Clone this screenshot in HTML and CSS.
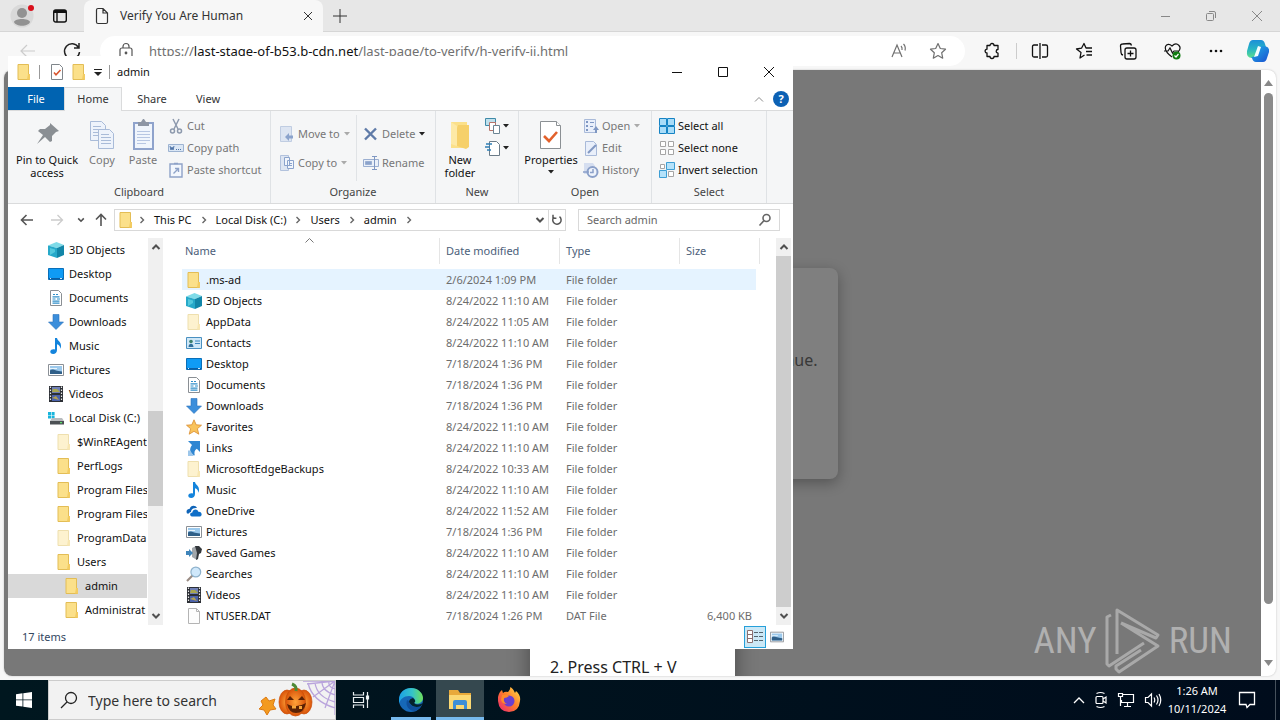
FILE: index.html
```html
<!DOCTYPE html>
<html lang="en">
<head>
<meta charset="utf-8">
<title>Verify You Are Human</title>
<link rel="stylesheet" href="styles.css">
</head>
<body>
<svg class="defs" aria-hidden="true">
  <linearGradient id="g-copilot" x1="0" y1="0" x2="0" y2="1"><stop offset="0" stop-color="#1b8fd8"/><stop offset=".5" stop-color="#27b5c4"/><stop offset="1" stop-color="#5fe08a"/></linearGradient>
  <linearGradient id="g-copilot2" x1="0" y1="0" x2="1" y2="1"><stop offset="0" stop-color="#1fb6e8"/><stop offset="1" stop-color="#1a4fd0"/></linearGradient>
  <linearGradient id="g-edge" x1="0" y1="0" x2="1" y2="0"><stop offset="0" stop-color="#1ba0e6"/><stop offset=".55" stop-color="#35c3c9"/><stop offset="1" stop-color="#6ee05a"/></linearGradient>
  <linearGradient id="g-fox" x1="1" y1="0" x2="0" y2="1"><stop offset="0" stop-color="#ffe14a"/><stop offset=".5" stop-color="#ff7a2a"/><stop offset="1" stop-color="#e8207a"/></linearGradient>
  <radialGradient id="g-pump"><stop offset="0" stop-color="#ffa33a"/><stop offset="1" stop-color="#d95309"/></radialGradient>
  <symbol id="i-folder" viewBox="0 0 16 16"><path fill="#fbe08a" stroke="#e3bd55" d="M2 .5h10.500V10l1 .5v5H2z"/><path fill="#f3cc62" d="M12 10h2v5.500h-3z"/></symbol>
  <symbol id="i-folder-hidden" viewBox="0 0 16 16"><path fill="#fdf2cf" stroke="#eedfae" d="M2 .5h10.500V10l1 .5v5H2z"/><path fill="#f8e7b3" d="M12 10h2v5.500h-3z"/></symbol>
  <symbol id="i-3d" viewBox="0 0 16 16"><path fill="#7fdbe8" d="M0 3.500 8.500 0 16 3 9 6z"/><path fill="#27a9c9" d="M0 3.500 9 6v10L0 13z"/><path fill="#1286a8" d="M9 6l7-3v10l-7 3z"/><path fill="#53c9dd" d="M2 6l5 1.500V10L2 13z"/></symbol>
  <symbol id="i-desktop" viewBox="0 0 16 16"><path fill="#0f9bf5" stroke="#0a6fb8" d="M.5 2.500h15v11H.5z"/><path fill="#0b5fa5" d="M1 12h14v1.500H1z"/><path fill="#cfeaff" d="M2 12h1v1H2zM12 12h2v1h-2z"/></symbol>
  <symbol id="i-doc" viewBox="0 0 16 16"><path fill="#fff" stroke="#8a8f94" d="M2.500.5h8l3 3v12h-11z"/><path stroke="#2f8fca" stroke-width="1.200" d="M5 4.500h2M8 4.500h2M4.500 6.800h7M4.500 9h3M9 9h3M4.500 11.200h7M4.500 13.200h7"/></symbol>
  <symbol id="i-down" viewBox="0 0 16 16"><path fill="#3b8edb" stroke="#2b74bd" stroke-width=".6" d="M5 .5h6V8h4.500L8 15.500.5 8H5z"/></symbol>
  <symbol id="i-music" viewBox="0 0 16 16"><path fill="#1484dc" d="M7 0h2c.4 3 4.500 3.800 4 8.500-.1 1-.6 1.800-1 2.300.5-3-1.200-4-3-4.600V12c0 2.500-1.800 4-3.800 4S2 14.800 2.300 13.300C2.600 11.500 5 10.600 7 11.500z"/></symbol>
  <symbol id="i-pic" viewBox="0 0 16 16"><path fill="#fff" stroke="#8b9096" d="M.5 2.500h15v11H.5z"/><path fill="#9cc9ec" d="M2 4h12v8H2z"/><path fill="#2f5f88" d="M2 8.500c3-2.500 5 .8 12 1V12H2z"/><path fill="#e8f4fc" d="M2 6h7v1H2z"/></symbol>
  <symbol id="i-video" viewBox="0 0 16 16"><path fill="#2c2f35" d="M1 0h14v16H1z"/><path fill="#6f7fb5" d="M4 1h8v6H4z"/><path fill="#a9a64e" d="M5 3h4l3 3H4z"/><path fill="#4b62ab" d="M4 9h8v6H4z"/><path fill="#b2a052" d="M4 12l4-2 3 4z"/><path stroke="#e8e8e8" stroke-width="1.200" stroke-dasharray="1.500 1.500" d="M2.500.5v15M13.500.5v15"/></symbol>
  <symbol id="i-disk" viewBox="0 0 16 16"><path fill="#19b5dc" d="M0 2h3v3H0zM3.600 2h3v3h-3zM0 5.600h3v3H0zM3.600 5.600h3v3h-3z"/><path fill="#b9bcbf" d="M4 8h10l2 3H2z"/><path fill="#4c5054" d="M2 11h14v3.500H2z"/><path fill="#5be06a" d="M12 12h2v1.200h-2z"/></symbol>
  <symbol id="i-contact" viewBox="0 0 16 16"><path fill="#cfe7f7" stroke="#4a90c0" d="M.5 2.500h15v11H.5z"/><circle cx="5" cy="6.500" r="1.800" fill="#3b7f6a"/><path fill="#2f6f9c" d="M2.500 12c0-4.500 5-4.500 5 0z"/><path stroke="#3b86bd" d="M9 6h5M9 8.500h5"/></symbol>
  <symbol id="i-star" viewBox="0 0 16 16"><path fill="#f9c35c" stroke="#d98c2e" stroke-width=".8" d="M8 .8l2.200 5 5.300.4-4.100 3.500 1.400 5.500L8 12.300l-4.800 2.900 1.400-5.500L.5 6.200l5.300-.4z"/></symbol>
  <symbol id="i-link" viewBox="0 0 16 16"><path fill="#2f86d2" d="M2 1h12v11l-3.200-3.200C8.500 10.500 8 12.500 8.800 15.500 3.500 13.500 3 9 6 5z"/><path fill="#9cc6ea" d="M2 10.500h2l4 5.500H2z"/></symbol>
  <symbol id="i-onedrive" viewBox="0 0 16 16"><path fill="#0f64b8" d="M1 10.500C-.5 7 2 5.500 3.500 6 4.500 2 9.500 1.500 11 5c-4-.5-6 1.500-6 4-1.500.2-2 1-2 1.500z"/><path fill="#0f6fc8" d="M6 13.500c-3-1-2-4 .3-4 .3-3.500 5.200-4 6-.8 4-.4 4.200 4.300 1.700 4.800z"/></symbol>
  <symbol id="i-games" viewBox="0 0 16 16"><path fill="#a2a7ab" d="M6 3l4-2 3 6-2 8-5-3z"/><path fill="#33373b" d="M9 1h4l3 3-1 4-2 1-1 5-2 1 1-7z"/><path fill="#3f85ba" d="M0 6h3V4l4 4-4 4v-2H0z"/></symbol>
  <symbol id="i-search-color" viewBox="0 0 16 16"><path stroke="#9a8c84" stroke-width="2.200" d="M1 15l5.500-5.500"/><circle cx="9.800" cy="6" r="4.900" fill="#cfe8fb" stroke="#8fb2cc" stroke-width="1.200"/></symbol>
  <symbol id="i-file" viewBox="0 0 16 16"><path fill="#fdfdfd" stroke="#b4b4b4" d="M2.500.5h8l3 3v12h-11z"/><path fill="none" stroke="#b4b4b4" d="M10.500.5v3h3"/></symbol>
  <symbol id="i-props" viewBox="0 0 16 16"><path fill="#fff" stroke="#80868b" d="M2.500.5h8l3 3v12h-11z"/><path fill="none" stroke="#d8562f" stroke-width="1.600" d="M5 8.500l2 2.300L11.500 6"/></symbol>
  <symbol id="i-up" viewBox="0 0 10 10"><path fill="none" stroke="#505050" stroke-width="2" d="M1.500 7 5 3.500 8.500 7"/></symbol>
  <symbol id="i-dn" viewBox="0 0 10 10"><path fill="none" stroke="#505050" stroke-width="2" d="M1.500 3 5 6.500 8.500 3"/></symbol>
  <symbol id="i-caret" viewBox="0 0 6 4"><path fill="currentColor" d="M0 0h6L3 3.500z"/></symbol>
  <symbol id="i-chev" viewBox="0 0 6 8"><path fill="none" stroke="#666" stroke-width="1.400" d="M1.500 1l3 3-3 3"/></symbol>
</svg>

<div class="desktop">
  <section class="browser">
    <header class="tabstrip">
      <button class="profile" aria-label="Profile"><svg width="28" height="28" viewBox="0 0 28 28"><circle cx="14" cy="14" r="11.500" fill="#d9d9d9"/><circle cx="14" cy="11" r="5" fill="#929292"/><path fill="#929292" d="M6 20c1-4 15-4 16 0-2 5-14 5-16 0z"/><circle cx="23" cy="6" r="3" fill="#d9101c"/></svg></button>
      <button class="actions" aria-label="Tab actions"><svg width="16" height="16" viewBox="0 0 16 16" fill="none" stroke="#111" stroke-width="1.400"><rect x="1.700" y="2" width="12.600" height="12" rx="2"/><path stroke-width="3" d="M2 3.500h12"/><path d="M5 4v10"/></svg></button>
      <div class="tab">
        <svg width="14" height="18" viewBox="0 0 14 18" fill="none" stroke="#333" stroke-width="1.200"><path d="M1.500 3c0-1 .6-1.500 1.500-1.500h5L12.500 6v9c0 1-.5 1.500-1.500 1.500H3c-1 0-1.500-.5-1.500-1.500zM8 1.500V6h4.500"/></svg>
        <span class="tab-title">Verify You Are Human</span>
        <button aria-label="Close tab"><svg width="10" height="10" viewBox="0 0 10 10" stroke="#333"><path d="M1 1l8 8M9 1L1 9"/></svg></button>
      </div>
      <button class="newtab" aria-label="New tab"><svg width="16" height="16" viewBox="0 0 16 16" stroke="#333"><path d="M8 1v14M1 8h14"/></svg></button>
      <div class="wincontrols">
        <button aria-label="Minimize"><svg width="12" height="12" viewBox="0 0 12 12" stroke="#888"><path d="M2 6.500h9"/></svg></button>
        <button aria-label="Restore"><svg width="12" height="12" viewBox="0 0 12 12" fill="none" stroke="#888"><rect x="1.500" y="3.500" width="7" height="7" rx="1"/><path d="M4 1.500h5q1.500 0 1.500 1.500v5"/></svg></button>
        <button aria-label="Close"><svg width="12" height="12" viewBox="0 0 12 12" stroke="#888"><path d="M1 1l10 10M11 1L1 11"/></svg></button>
      </div>
    </header>
    <nav class="toolbar">
      <button class="tool" aria-label="Back"><svg width="20" height="20" viewBox="0 0 20 20" fill="none" stroke="#ccc" stroke-width="1.200"><path d="M3 10h14M9 4l-6 6 6 6"/></svg></button>
      <button class="tool" aria-label="Refresh"><svg width="20" height="20" viewBox="0 0 20 20" fill="none" stroke="#222" stroke-width="1.500"><path d="M16.500 6.500A7.500 7.500 0 1 0 17.500 11M17 2v5h-5"/></svg></button>
      <div class="omnibox">
        <svg width="16" height="18" viewBox="0 0 16 18" fill="none" stroke="#555" stroke-width="1.200"><rect x="2" y="6" width="12" height="10" rx="2"/><path d="M5 6V4.500a3 3 0 0 1 6 0V6"/><circle cx="8" cy="11" r=".8" fill="#555"/></svg>
        <div class="url" role="textbox" aria-label="Address" contenteditable="true" spellcheck="false">https://<b>last-stage-of-b53.b-cdn.net</b>/last-page/to-verify/h-verify-ii.html</div>
        <button aria-label="Read aloud"><svg width="18" height="18" viewBox="0 0 18 18" fill="none" stroke="#707070" stroke-width="1.200"><path d="M2 15L7 3l5 12M4 11h6M11 4q1.500 1.500 1 4M13.500 2q2.500 2.500 1.500 6.500"/></svg></button>
        <button aria-label="Favorite"><svg width="18" height="18" viewBox="0 0 18 18" fill="none" stroke="#707070" stroke-width="1.200" stroke-linejoin="round"><path d="M9 1.500l2.300 5 5.200.7-3.800 3.600 1 5.400L9 13.500l-4.700 2.700 1-5.400L1.500 7.200l5.200-.7z"/></svg></button>
      </div>
      <div class="tools">
        <button aria-label="Extensions"><svg width="18" height="18" viewBox="0 0 18 18" fill="none" stroke="#111" stroke-width="1.300" stroke-linejoin="round"><path d="M4 3.500h3a2 2 0 0 1 4 0h4v4a1.800 1.800 0 0 0 0 3.600v3.400h-4a2 2 0 0 1-4 0H4V11a1.900 1.900 0 1 1 0-3.800z"/></svg></button>
        <span class="rule"></span>
        <button aria-label="Split screen"><svg width="18" height="18" viewBox="0 0 18 18" fill="none" stroke="#111" stroke-width="1.300"><path d="M7 3H3q-1.500 0-1.500 1.500v9Q1.500 15 3 15h4M11 3h4q1.500 0 1.500 1.500v9Q16.500 15 15 15h-4M9 1v16"/></svg></button>
        <button aria-label="Favorites"><svg width="18" height="18" viewBox="0 0 18 18" fill="none" stroke="#111" stroke-width="1.300" stroke-linejoin="round"><path d="M9.500 13L5 16l1-5.500L1.500 7l5-.8L9 1.500l2 4.500h6M11 9.500h6M11.500 13H17"/></svg></button>
        <button aria-label="Collections"><svg width="18" height="18" viewBox="0 0 18 18" fill="none" stroke="#111" stroke-width="1.300"><rect x="6" y="6" width="11" height="11" rx="2"/><path d="M11.500 8.500v6M8.500 11.500h6M4 13q-2-.5-2-2.500L1.500 4Q1.500 2 3.500 2l7-.5q1.500 0 2 2"/></svg></button>
        <button aria-label="Browser essentials"><svg width="18" height="18" viewBox="0 0 18 18" fill="none" stroke="#111" stroke-width="1.200"><path d="M9 15C-3 6 4-1 9 4c5-5 11 1 6 6M1 9h4l2-3 2.500 5L11 9h4"/><circle cx="13.500" cy="13.500" r="4" fill="#107c10" stroke="none"/><path stroke="#fff" d="M11.500 13.500l1.500 1.500 2.500-3"/></svg></button>
        <button aria-label="Settings and more"><svg width="18" height="18" viewBox="0 0 18 18" fill="#111"><circle cx="4" cy="9" r="1.300"/><circle cx="9" cy="9" r="1.300"/><circle cx="14" cy="9" r="1.300"/></svg></button>
        <button aria-label="Copilot"><svg width="26" height="26" viewBox="0 0 26 26"><path fill="url(#g-copilot)" d="M8 2h8q3 0 4 4l1 3h-4q-3 0-4 3l-2 6q-1 3-4 2-6 0-5-7l2-7q1-4 4-4z"/><path fill="url(#g-copilot2)" d="M18 24h-7q-3 0-4-4l-1-1q5 0 6-4l2-5q1-2 4-2 7 0 6 6l-2 6q-1 4-4 4z"/><path fill="#f2fdff" d="M13 8l3 1-3 9-4 1z"/></svg></button>
      </div>
    </nav>
    <main class="viewport">
      <div class="page">
        <div class="captcha"><p>continue.</p></div>
        <div class="steps"><p>2. Press CTRL + V</p></div>
        <div class="watermark">
          <span>ANY</span>
          <svg width="56" height="66" viewBox="0 0 56 66" fill="none" stroke="#a9a9a9" stroke-width="3" stroke-linejoin="round"><path d="M6 7L2 9v47l2 2 35-23M12 46V2l41 25-2 3-35-15M16 15l37 23-39 26-3-3v-3l25-16"/></svg>
          <span>RUN</span>
        </div>
      </div>
      <div class="pagebar"><svg width="9" height="6" viewBox="0 0 6 4"><path fill="#888" d="M0 4h6L3 0z"/></svg><i></i><svg width="9" height="6" viewBox="0 0 6 4"><path fill="#888" d="M0 0h6L3 4z"/></svg></div>
    </main>
  </section>

  <section class="explorer">
    <header class="titlebar">
      <svg class="i16"><use href="#i-folder"/></svg><span class="tick"></span>
      <svg class="i16"><use href="#i-props"/></svg>
      <svg class="i16"><use href="#i-folder"/></svg>
      <svg class="qat" width="8" height="8" viewBox="0 0 8 8"><path d="M0 1.500h8" stroke="#222"/><path fill="#222" d="M0 4h8L4 8z"/></svg><span class="tick"></span>
      <h1>admin</h1>
      <div class="winbtns">
        <button aria-label="Minimize"><svg width="12" height="12" viewBox="0 0 12 12" stroke="#111"><path d="M1 6.500h10"/></svg></button>
        <button aria-label="Maximize"><svg width="12" height="12" viewBox="0 0 12 12" fill="none" stroke="#111"><path d="M1.500 1.500h9v9h-9z"/></svg></button>
        <button aria-label="Close"><svg width="12" height="12" viewBox="0 0 12 12" stroke="#111"><path d="M1 1l10 10M11 1L1 11"/></svg></button>
      </div>
    </header>
    <nav class="menus">
      <button class="file">File</button><button class="on">Home</button><button>Share</button><button>View</button>
      <svg class="collapse" width="10" height="6" viewBox="0 0 10 6" fill="none" stroke="#8a8a8a"><path d="M1 5.500l4-4 4 4"/></svg>
      <button class="help" aria-label="Help">?</button>
    </nav>
    <div class="ribbon">
      <div class="group clip">
        <div class="body">
          <button class="big pin"><svg width="32" height="32" viewBox="0 0 32 32" fill="#8a8f94"><path d="M19 4l9 8-3 1-4 4v5l-2 1-5-5-8 7 6-9-5-4 2-2h5l5-4z"/></svg>Pin to Quick access</button>
          <button class="big copy off"><svg width="32" height="32" viewBox="0 0 32 32" fill="#eef3fb" stroke="#a9bbd8"><path d="M4.500 2.500h11l4 4v15h-15z"/><path d="M7 7.500h8M7 10.500h10M7 13.500h5M7 16.500h5"/><path d="M12.500 10.500h11l4 4v15h-15z"/><path d="M15 15.500h8M15 18.500h10M15 21.500h10M15 24.500h10"/></svg>Copy</button>
          <button class="big paste off"><svg width="32" height="32" viewBox="0 0 32 32" fill="#f0f5fc" stroke="#8fa3cc" stroke-width="2"><path d="M7 4h19v26H7z"/><path fill="#8d96a5" stroke="none" d="M11 3h3l2-3h1l2 3h3v4H11z"/><path stroke="#b7c6e2" stroke-width="1" d="M10 12.500h13M10 15.500h13M10 18.500h13M10 21.500h13M10 24.500h9"/></svg>Paste</button>
          <div class="stack off">
            <button><svg class="i16" viewBox="0 0 16 16" fill="none" stroke="#8d99ad" stroke-width="1.500"><path d="M5 1l5 10M11 1L6 11"/><circle cx="4.500" cy="13" r="2"/><circle cx="11.500" cy="13" r="2"/></svg>Cut</button>
            <button><svg class="i16" viewBox="0 0 16 16"><path fill="#dbe7f5" stroke="#9db3d1" d="M.5 4.500h15v7H.5z"/><path fill="none" stroke="#4f74a8" d="M2 6l1 4 1-3 1 3 1-4M8 9.500h1M10 9.500h1M12 9.500h1"/></svg>Copy path</button>
            <button><svg class="i16" viewBox="0 0 16 16" fill="#f3f7fd" stroke="#8ea2c8" stroke-width="1.400"><path d="M2 2h12v13H2z"/><path d="M6 1.500h4M5.500 11.500L10 7M7 6.500h3.500V10"/></svg>Paste shortcut</button>
          </div>
        </div>
        <h2>Clipboard</h2>
      </div>
      <div class="group org">
        <div class="body">
          <div class="stack two off">
            <button><svg class="i16" viewBox="0 0 16 16"><path fill="#dde5f2" stroke="#c0cde2" d="M1.500.5h11v15h-11z"/><path fill="#8ba3cc" d="M6 11l4-4v2.500h4v3h-4V15z"/></svg>Move to<svg class="caret"><use href="#i-caret"/></svg></button>
            <button><svg class="i16" viewBox="0 0 16 16" fill="#dde5f2" stroke="#b2c2dd"><path d="M1.500.5h8v15h-8z"/><path fill="#f2f6fc" stroke="#8ba3cc" d="M5.500 2.500h5v8h-5zM8.500 5.500h6v8h-6zM10 8.500h3M10 10.500h3"/></svg>Copy to<svg class="caret"><use href="#i-caret"/></svg></button>
          </div>
          <div class="stack two off line">
            <button><svg class="i16" viewBox="0 0 16 16" fill="none" stroke="#5f7ba8" stroke-width="2.400"><path d="M2 2.500l11 11M13 2.500l-11 11"/></svg>Delete<svg class="caret dark"><use href="#i-caret"/></svg></button>
            <button><svg class="i16" viewBox="0 0 16 16" fill="#eaf0f9" stroke="#9bafd1"><path d="M.5 4.500h15v7H.5z"/><path fill="#8ba3cc" d="M2.500 6.500h6v3h-6z"/><path d="M9 1.500h5M9 14.500h5M11.500 1.500v13" stroke="#7f97c2"/></svg>Rename</button>
          </div>
        </div>
        <h2>Organize</h2>
      </div>
      <div class="group new">
        <div class="body">
          <button class="big newf"><svg width="32" height="32" viewBox="0 0 32 32"><path fill="#fbe08a" d="M7 3h16v22l-2 4H7z"/><path fill="#f6d06a" d="M14 6h11v22l-3 2-9-3V9z"/><path fill="#fde9a6" d="M7 3l6 4v20l-6-2z"/></svg>New folder</button>
          <div class="stack icons">
            <button aria-label="New item"><svg class="i16" viewBox="0 0 16 16" fill="#fff" stroke="#6b8594"><path fill="#bfe0ec" stroke="#3f8aa8" d="M.5.500h10v7H.5z"/><path stroke="#b5746a" d="M4.500 4.500h6v8h-6z"/><path d="M8.500 7.500h6v8h-6z"/></svg><svg class="caret dark"><use href="#i-caret"/></svg></button>
            <button aria-label="Easy access"><svg class="i16" viewBox="0 0 16 16" fill="#fff" stroke="#6b7b88"><path d="M4.500 1.500h7l3 3v11h-10z"/><path stroke="#2f7fb5" stroke-width="1.400" d="M1 4h6M0 7h5M2 10h4"/></svg><svg class="caret dark"><use href="#i-caret"/></svg></button>
          </div>
        </div>
        <h2>New</h2>
      </div>
      <div class="group open">
        <div class="body">
          <button class="big prop"><svg width="32" height="32" viewBox="0 0 32 32" fill="#fff" stroke="#8b9094"><path d="M5.500 2.500h16l4 4v23h-20z"/><path d="M21.500 2.500v4h4"/><path fill="none" stroke="#e2612c" stroke-width="2.600" d="M9 17l5 5 8-9"/></svg>Properties<svg class="caret dark"><use href="#i-caret"/></svg></button>
          <div class="stack off">
            <button><svg class="i16" viewBox="0 0 16 16" fill="#e9effa" stroke="#a9bad9"><path d="M1.500 1.500h11v13h-11z"/><path fill="#7f97c2" stroke="none" d="M3 3h2v2H3zM3 7h2v2H3zM3 11h2v2H3zM7 4h4v1H7zM7 8h3v1H7zM13 8l3 4h-2v3h-2v-3h-2z"/></svg>Open<svg class="caret"><use href="#i-caret"/></svg></button>
            <button><svg class="i16" viewBox="0 0 16 16" fill="#e9effa" stroke="#a9bad9"><path d="M2.500 1.500h8l3 3v11h-11z"/><path stroke="#8298c2" stroke-width="2" d="M5 13l8-8"/></svg>Edit</button>
            <button><svg class="i16" viewBox="0 0 16 16"><path fill="#d5def0" d="M1 1h9l2 3v8H1z"/><circle cx="9.500" cy="10" r="5" fill="#eef3fb" stroke="#8ba0c9" stroke-width="2"/><path fill="none" stroke="#8ba0c9" stroke-width="1.500" d="M10 7v3.500H7M0 10h6"/></svg>History</button>
          </div>
        </div>
        <h2>Open</h2>
      </div>
      <div class="group sel">
        <div class="body">
          <div class="stack">
            <button><svg class="i16" viewBox="0 0 16 16" fill="#a9dcf8" stroke="#1583c4"><path d="M.5.500h7v7h-7zM8.500.5h7v7h-7zM.5 8.500h7v7h-7zM8.500 8.500h7v7h-7z"/></svg>Select all</button>
            <button><svg class="i16" viewBox="0 0 16 16" fill="#fff" stroke="#a5a5a5"><path d="M1.500 1.500h5v5h-5zM9.500 1.500h5v5h-5zM1.500 9.500h5v5h-5zM9.500 9.500h5v5h-5z"/></svg>Select none</button>
            <button><svg class="i16" viewBox="0 0 16 16" fill="#b5e2fa" stroke="#3d9ed4"><path d="M7.500.5h8v7h-8zM.5 8.500h7v7h-7z"/><path fill="#fff" stroke="#a5a5a5" d="M1.500 2.500h4v4h-4zM9.500 9.500h5v5h-5z"/></svg>Invert selection</button>
          </div>
        </div>
        <h2>Select</h2>
      </div>
    </div>
    <div class="addressrow">
      <button class="nav" aria-label="Back"><svg width="14" height="14" viewBox="0 0 14 14" fill="none" stroke="#555" stroke-width="1.600"><path d="M1.500 7H13M6.500 2l-5 5 5 5"/></svg></button>
      <button class="nav" aria-label="Forward"><svg width="14" height="14" viewBox="0 0 14 14" fill="none" stroke="#ccc" stroke-width="1.300"><path d="M1 7h11.500M7.500 2l5 5-5 5"/></svg></button>
      <button class="nav narrow" aria-label="Recent"><svg width="8" height="8"><use href="#i-dn"/></svg></button>
      <button class="nav narrow" aria-label="Up"><svg width="14" height="14" viewBox="0 0 14 14" fill="none" stroke="#555" stroke-width="1.600"><path d="M7 1.500V13M2 6.500l5-5 5 5"/></svg></button>
      <div class="crumbs">
        <svg class="i16"><use href="#i-folder"/></svg><svg class="chev"><use href="#i-chev"/></svg>
        <button>This PC</button><svg class="chev"><use href="#i-chev"/></svg>
        <button>Local Disk (C:)</button><svg class="chev"><use href="#i-chev"/></svg>
        <button>Users</button><svg class="chev"><use href="#i-chev"/></svg>
        <button>admin</button><svg class="chev"><use href="#i-chev"/></svg>
        <span class="grow"></span>
        <button class="end" aria-label="Previous locations"><svg width="10" height="10"><use href="#i-dn"/></svg></button>
        <button class="end refresh" aria-label="Refresh"><svg width="12" height="12" viewBox="0 0 12 12" fill="none" stroke="#555" stroke-width="1.500"><path d="M3 3a4.200 4.200 0 1 0 5.500-.3M2 .8v3.400h3.400"/></svg></button>
      </div>
      <label class="find"><input type="search" placeholder="Search admin" aria-label="Search admin"><svg width="14" height="14" viewBox="0 0 14 14" fill="none" stroke="#666" stroke-width="1.600"><circle cx="8.500" cy="5" r="3.500"/><path d="M6 7.500L1.500 12.500"/></svg></label>
    </div>
    <div class="panes">
      <ul class="tree">
        <li><svg class="i16"><use href="#i-3d"/></svg>3D Objects</li>
        <li><svg class="i16"><use href="#i-desktop"/></svg>Desktop</li>
        <li><svg class="i16"><use href="#i-doc"/></svg>Documents</li>
        <li><svg class="i16"><use href="#i-down"/></svg>Downloads</li>
        <li><svg class="i16"><use href="#i-music"/></svg>Music</li>
        <li><svg class="i16"><use href="#i-pic"/></svg>Pictures</li>
        <li><svg class="i16"><use href="#i-video"/></svg>Videos</li>
        <li><svg class="i16"><use href="#i-disk"/></svg>Local Disk (C:)</li>
        <li class="l2"><svg class="i16"><use href="#i-folder-hidden"/></svg>$WinREAgent</li>
        <li class="l2"><svg class="i16"><use href="#i-folder"/></svg>PerfLogs</li>
        <li class="l2"><svg class="i16"><use href="#i-folder"/></svg>Program Files</li>
        <li class="l2"><svg class="i16"><use href="#i-folder"/></svg>Program Files</li>
        <li class="l2"><svg class="i16"><use href="#i-folder-hidden"/></svg>ProgramData</li>
        <li class="l2"><svg class="i16"><use href="#i-folder"/></svg>Users</li>
        <li class="l3 current"><svg class="i16"><use href="#i-folder"/></svg>admin</li>
        <li class="l3"><svg class="i16"><use href="#i-folder"/></svg>Administrat</li>
      </ul>
      <div class="bar treebar"><svg width="10" height="10"><use href="#i-up"/></svg><div class="track"><i></i></div><svg width="10" height="10"><use href="#i-dn"/></svg></div>
      <div class="listing">
        <svg class="sort" width="9" height="5" viewBox="0 0 9 5" fill="none" stroke="#777"><path d="M.5 4.500l4-4 4 4"/></svg>
        <table>
          <colgroup><col><col class="c-date"><col class="c-type"><col class="c-size"></colgroup>
          <thead><tr><th>Name</th><th>Date modified</th><th>Type</th><th>Size</th></tr></thead>
          <tbody>
            <tr class="hover"><td><svg class="i16"><use href="#i-folder"/></svg>.ms-ad</td><td>2/6/2024 1:09 PM</td><td>File folder</td><td></td></tr>
            <tr><td><svg class="i16"><use href="#i-3d"/></svg>3D Objects</td><td>8/24/2022 11:10 AM</td><td>File folder</td><td></td></tr>
            <tr><td><svg class="i16"><use href="#i-folder-hidden"/></svg>AppData</td><td>8/24/2022 11:05 AM</td><td>File folder</td><td></td></tr>
            <tr><td><svg class="i16"><use href="#i-contact"/></svg>Contacts</td><td>8/24/2022 11:10 AM</td><td>File folder</td><td></td></tr>
            <tr><td><svg class="i16"><use href="#i-desktop"/></svg>Desktop</td><td>7/18/2024 1:36 PM</td><td>File folder</td><td></td></tr>
            <tr><td><svg class="i16"><use href="#i-doc"/></svg>Documents</td><td>7/18/2024 1:36 PM</td><td>File folder</td><td></td></tr>
            <tr><td><svg class="i16"><use href="#i-down"/></svg>Downloads</td><td>7/18/2024 1:36 PM</td><td>File folder</td><td></td></tr>
            <tr><td><svg class="i16"><use href="#i-star"/></svg>Favorites</td><td>8/24/2022 11:10 AM</td><td>File folder</td><td></td></tr>
            <tr><td><svg class="i16"><use href="#i-link"/></svg>Links</td><td>8/24/2022 11:10 AM</td><td>File folder</td><td></td></tr>
            <tr><td><svg class="i16"><use href="#i-folder-hidden"/></svg>MicrosoftEdgeBackups</td><td>8/24/2022 10:33 AM</td><td>File folder</td><td></td></tr>
            <tr><td><svg class="i16"><use href="#i-music"/></svg>Music</td><td>8/24/2022 11:10 AM</td><td>File folder</td><td></td></tr>
            <tr><td><svg class="i16"><use href="#i-onedrive"/></svg>OneDrive</td><td>8/24/2022 11:52 AM</td><td>File folder</td><td></td></tr>
            <tr><td><svg class="i16"><use href="#i-pic"/></svg>Pictures</td><td>7/18/2024 1:36 PM</td><td>File folder</td><td></td></tr>
            <tr><td><svg class="i16"><use href="#i-games"/></svg>Saved Games</td><td>8/24/2022 11:10 AM</td><td>File folder</td><td></td></tr>
            <tr><td><svg class="i16"><use href="#i-search-color"/></svg>Searches</td><td>8/24/2022 11:10 AM</td><td>File folder</td><td></td></tr>
            <tr><td><svg class="i16"><use href="#i-video"/></svg>Videos</td><td>8/24/2022 11:10 AM</td><td>File folder</td><td></td></tr>
            <tr><td><svg class="i16"><use href="#i-file"/></svg>NTUSER.DAT</td><td>7/18/2024 1:26 PM</td><td>DAT File</td><td>6,400 KB</td></tr>
          </tbody>
        </table>
      </div>
      <div class="bar"><svg width="10" height="10"><use href="#i-up"/></svg><div class="track full"><i></i></div><svg width="10" height="10"><use href="#i-dn"/></svg></div>
    </div>
    <footer class="status">
      <span>17 items</span>
      <button class="view on" aria-label="Details view"><svg class="i16" viewBox="0 0 16 16" fill="#fff" stroke="#8b6f70"><path d="M.5 1.500h5v12h-5zM.5 5.500h5M.5 9.500h5"/><path stroke="#54646e" d="M7 3.500h4M12 3.500h4M7 7.500h4M12 7.500h4M7 11.500h4M12 11.500h4"/></svg></button>
      <button class="view" aria-label="Large icons view"><svg width="14" height="14"><use href="#i-pic"/></svg></button>
    </footer>
  </section>

  <footer class="taskbar">
    <button class="start" aria-label="Start"><svg width="16" height="16" viewBox="0 0 16 16" fill="#fff"><path d="M0 2.300l6.500-1v6.200H0zM7.300 1.200L16 0v7.500H7.300zM0 8.300h6.500v6.300L0 13.700zM7.300 8.300H16V16l-8.700-1.300z"/></svg></button>
    <label class="tasksearch">
      <svg width="18" height="18" viewBox="0 0 18 18" fill="none" stroke="#222" stroke-width="1.300"><circle cx="11" cy="7" r="5.500"/><path d="M7 11l-6 6"/></svg>
      <input type="search" placeholder="Type here to search" aria-label="Type here to search">
      <svg class="art" width="78" height="38" viewBox="0 0 78 38"><g fill="none" stroke="#b9a4dc" stroke-width="1.300"><path d="M78 0L50 3M78 0L56 16M78 0L68 27M78 0v34M78 0L46 0M72 1q-1 5 6 7M65 1q0 9 13 13M58 2q2 14 20 19M51 2q4 18 27 25"/></g><path fill="#f39a1f" stroke="#dd7a12" stroke-linejoin="round" d="M9 16l3 4 6-2-2 6 3 4-6 1-3 5-3-5-5-1 4-4-2-4z"/><g fill="url(#g-pump)" stroke="#c94f08" stroke-width=".7"><ellipse cx="30" cy="21" rx="8" ry="12"/><ellipse cx="47" cy="21" rx="8" ry="12"/><ellipse cx="38.500" cy="21" rx="10" ry="14"/></g><path fill="none" stroke="#4f8a35" stroke-width="3" d="M39 10q1-5-4-7"/><path fill="#5a2205" d="M30 19l3-4 4 4zM41 19l4-4 3 4zM30 23q9 5 19-1-2 10-10 10-7 0-9-9z"/><path fill="#f7a63a" d="M35 24.500h4v3h-4zM42 28h3v-3h-3z"/></svg>
    </label>
    <button aria-label="Task View"><svg width="18" height="18" viewBox="0 0 18 18" fill="none" stroke="#e8eef0" stroke-width="1.200"><path d="M1.500 1v3h10V1M1.500 6.500h10v5h-10zM1.500 17v-3h10v3M15.500 1v16"/><path fill="#fff" d="M14.500 5h2v3h-2z"/></svg></button>
    <button class="run" aria-label="Microsoft Edge"><svg width="26" height="26" viewBox="0 0 26 26"><circle cx="13" cy="13" r="12" fill="#1668b8"/><path fill="url(#g-edge)" d="M1 13C1 5 7 1 13 1c7 0 12 5 12 10 0 5-6 7-9 5 2-3 0-7-5-7-5 0-9 3-10 8z"/><path fill="#0f4f9c" d="M9 13c-2 6 2 11 8 11 3-1 5-3 6-5-5 2-11 1-12-5z"/><path fill="#04222c" d="M15 11q4 3 1 5 3 3 9 0l-2 3q-8 3-12-4 0-3 4-4z"/></svg></button>
    <button class="run active" aria-label="File Explorer"><svg width="24" height="22" viewBox="0 0 24 22"><path fill="#e8a93a" d="M1 1h9l2 3h11v4H1z"/><path fill="#fbd873" d="M1 6h22v14H1z"/><path fill="#3f8fd6" d="M5 20v-7q0-2 2-2h10q2 0 2 2v7h-3v-4H8v4z"/></svg></button>
    <button aria-label="Firefox"><svg width="26" height="26" viewBox="0 0 26 26"><path fill="url(#g-fox)" d="M2 10Q3 5 6 3l1 3q2-2 5-1 3-3 2-5 3 1 5 6l1-2q5 4 4 10-1 11-11 11T2 14z"/><circle cx="13" cy="14" r="5.500" fill="#6a3fd0"/><path fill="#ff8a2a" d="M6 8q4-1 7 1-2 2-5 2-1 4 3 6-5 0-6-4z"/></svg></button>
    <div class="tray">
      <svg width="12" height="8" viewBox="0 0 12 8" fill="none" stroke="#fff" stroke-width="1.300"><path d="M1 7l5-5 5 5"/></svg>
      <svg width="14" height="18" viewBox="0 0 14 18" fill="none" stroke="#fff" stroke-width="1.200"><rect x="2" y="5.500" width="7" height="7" rx="1"/><path d="M9 8l3-2v6l-3-2M2.500 2.500q4-2 8 0M2.500 15.500q4 2 8 0"/></svg>
      <svg width="18" height="18" viewBox="0 0 18 18" fill="none" stroke="#fff" stroke-width="1.200"><path d="M6 3.500h10.500v8H4.500V9M10.500 12v3M7 15.500h7M1.500 2.500h4v3h-4zM3.500 6v9"/></svg>
      <svg width="18" height="16" viewBox="0 0 18 16" fill="none" stroke="#fff" stroke-width="1.200"><path d="M1.500 5.500h2.500l3.500-3.500v12L4 10.500H1.500zM10 5.500q1.500 2.500 0 5M12.500 3.500q3 4.500 0 9M15 2q3.500 6 0 12"/></svg>
      <div class="clock"><time>1:26 AM</time><time>10/11/2024</time></div>
      <svg class="note" width="18" height="18" viewBox="0 0 18 18" fill="none" stroke="#fff" stroke-width="1.300"><path d="M1.500 1.500h15v12H12L9 16.500 8 13.500H1.500z"/></svg>
    </div>
  </footer>
</div>
</body>
</html>
```
FILE: styles.css
```css
* { box-sizing: border-box; }
body { margin: 0; font: 11px/14px "Noto Sans", "Open Sans", sans-serif; color: #111; }
button { padding: 0; border: 0; background: none; font: inherit; color: inherit; display: flex; align-items: center; justify-content: center; }
input { border: 0; background: none; font: inherit; padding: 0; outline: 0; min-width: 0; flex: 1; }
h1, h2, p, ul { margin: 0; padding: 0; font-weight: 400; }
svg { display: block; flex: none; }
.defs { position: absolute; width: 0; height: 0; }
.i16 { width: 16px; height: 16px; }
.caret { width: 6px; height: 4px; color: #aaa; }
.caret.dark { color: #222; }

.desktop { position: relative; height: 100vh; display: flex; flex-direction: column; overflow: hidden; }

/* browser */
.browser { flex: 1; min-height: 0; display: flex; flex-direction: column; background: #f7f7f7; }
.tabstrip { display: flex; height: 32px; background: #e7e7e7; border-bottom: 1px solid #d6d6d6; padding-left: 8px; }
.profile { width: 28px; }
.actions { width: 48px; }
.tab { width: 239px; height: 32px; margin-bottom: -1px; background: #f7f7f7; border-radius: 8px 8px 0 0; display: flex; align-items: center; gap: 11px; padding: 0 10px 0 11px; }
.tab-title { flex: 1; font-size: 12px; color: #333; white-space: nowrap; }
.newtab { width: 34px; }
.wincontrols { margin-left: auto; display: flex; }
.wincontrols button { width: 46px; }
.toolbar { display: flex; align-items: center; height: 38px; padding: 0 2px 0 6px; }
.tool { width: 44px; }
.omnibox { flex: 1; height: 30px; margin-left: 6px; background: #fff; border-radius: 15px; display: flex; align-items: center; gap: 15px; padding: 0 15px 0 18px; min-width: 0; }
.omnibox button { width: 24px; }
.url { flex: 1; font-size: 13px; line-height: 18px; color: #707070; white-space: nowrap; overflow: hidden; }
.url b { font-weight: 400; color: #111; }
.tools { display: flex; align-items: center; }
.tools button { width: 44px; }
.tools button:first-child { width: 54px; }
.tools button:last-child { width: 40px; }
.rule { width: 1px; height: 16px; background: #ccc; margin: 0 1px 0 -3px; }

.viewport { flex: 1; min-height: 0; margin: 0 4px 4px; display: flex; border-radius: 8px; overflow: hidden; background: #fff; box-shadow: 0 0 2px #bbb; }
.page { position: relative; flex: 1; min-height: 0; overflow: hidden; background: #787878; display: flex; flex-direction: column; align-items: center; }
.captcha { width: 410px; height: 211px; flex: none; margin-top: 198px; background: #7f7f7f; border-radius: 8px; box-shadow: 0 4px 14px rgba(0,0,0,.3); padding: 80px 20px 0; text-align: right; font-size: 16px; line-height: 24px; color: #383838; }
.steps { width: 205px; flex: none; margin-top: 136px; background: #fff; box-shadow: 0 0 20px rgba(0,0,0,.4); padding: 43px 20px 16px; font-size: 16px; line-height: 18px; white-space: nowrap; color: #222; }
.watermark { position: absolute; right: 29px; bottom: 2px; display: flex; align-items: center; gap: 8px; color: #b0b0b0; font: 37px/62px "Roboto Condensed", "Open Sans Condensed", "Liberation Sans", sans-serif; }
.pagebar { width: 15px; display: flex; flex-direction: column; align-items: center; padding: 10px 0; gap: 7px; }
.pagebar i { width: 9px; flex: 1; margin-bottom: 49px; border-radius: 5px; background: #8b8b8b; }

/* file manager */
.explorer { position: absolute; inset: 56px 487px 71px 8px; background: #fff; display: flex; flex-direction: column; }
.titlebar { height: 31px; display: flex; align-items: center; padding-left: 8px; }
.titlebar h1 { font-size: 11px; margin-left: 7px; }
.tick { width: 1px; height: 14px; background: #999; margin: 0 9px 0 7px; }
.titlebar .i16 + .i16 { margin-left: 6px; }
.qat { margin-left: 7px; }
.qat + .tick { margin-right: 0; }
.winbtns { margin-left: auto; display: flex; height: 100%; padding-right: 1px; }
.winbtns button { width: 46px; }
.menus { display: flex; align-items: center; height: 24px; border-bottom: 1px solid #dadbdc; padding-right: 4px; color: #333; }
.menus button { width: 56px; height: 23px; }
.menus .file { background: #0063b1; color: #fff; }
.menus .on { width: 58px; height: 24px; margin-right: 2px; background: #f5f6f7; border: 1px solid #dadbdc; border-bottom: 0; }
.collapse { margin-left: auto; margin-right: 9px; }
.menus .help { width: 16px; height: 16px; border-radius: 50%; background: #0c61b4; color: #fff; font-weight: 700; }
.ribbon { display: flex; background: #f5f6f7; border-bottom: 1px solid #dadbdc; }
.group { border-right: 1px solid #dfe2e5; padding-top: 4px; }
.body { display: flex; height: 66px; }
.group h2 { font-size: 11px; line-height: 22px; text-align: center; color: #444; }
.clip { width: 263px; }
.org { width: 165px; }
.new { width: 83px; }
.open { width: 133px; }
.sel { width: 115px; }
.big { flex-direction: column; justify-content: flex-start; padding-top: 4px; line-height: 13px; }
.big > svg:first-child { margin-bottom: 2px; }
.big > .caret { margin-top: 4px; }
.pin { width: 78px; padding-left: 4px; padding-right: 4px; }
.copy { width: 32px; }
.paste { width: 50px; }
.newf { width: 48px; padding-left: 4px; padding-right: 4px; }
.prop { width: 64px; }
.off { color: #777; }
.stack { display: flex; flex-direction: column; white-space: nowrap; }
.stack button { height: 22px; gap: 3px; justify-content: flex-start; }
.stack .caret { margin-left: 1px; }
.two { padding: 8px 0 0 8px; gap: 7px; }
.two.line { border-left: 1px solid #e0e3e6; padding-left: 6px; }
.two:first-child { width: 85px; }
.icons { padding-left: 1px; }
.stack.icons button { gap: 1px; }
.sel .stack { padding-left: 7px; }

.addressrow { display: flex; align-items: center; height: 31px; padding: 0 13px 0 8px; }
.nav { width: 30px; height: 22px; padding-right: 8px; }
.nav.narrow { width: 20px; padding-right: 2px; }
.nav:nth-child(3) { margin-left: -4px; }
.crumbs { flex: 1; display: flex; align-items: center; height: 22px; margin-left: 2px; border: 1px solid #d9d9d9; padding-left: 3px; }
.crumbs .i16 { margin-right: -4px; }
.crumbs button { height: 20px; white-space: nowrap; }
.chev { width: 6px; height: 8px; margin: 0 9px; }
.grow { flex: 1; }
.crumbs .end { width: 17px; }
.crumbs .refresh { border-left: 1px solid #d9d9d9; }
.find { width: 202px; height: 22px; margin-left: 12px; border: 1px solid #d9d9d9; display: flex; align-items: center; padding: 0 7px 0 8px; }
.find input::placeholder { color: #666; opacity: 1; }

.panes { flex: 1; min-height: 0; display: flex; padding-top: 3px; }
.tree { width: 139px; list-style: none; overflow: hidden; white-space: nowrap; }
.tree li { height: 24px; display: flex; align-items: center; gap: 5px; padding-left: 40px; }
.tree .l2 { padding-left: 48px; }
.tree .l3 { padding-left: 56px; }
.tree .current { background: #d9d9d9; }
.bar { width: 15px; background: #f0f0f0; display: flex; flex-direction: column; align-items: center; padding: 4px 0; gap: 4px; margin-right: 2px; }
.track { flex: 1; width: 100%; display: flex; flex-direction: column; }
.track i { flex: none; height: 27%; margin-top: 155px; background: #cdcdcd; }
.track.full i { height: 100%; margin-top: 0; }
.treebar { margin-left: 1px; margin-right: 19px; }
.listing { position: relative; flex: 1; min-width: 0; overflow: hidden; padding-right: 20px; }
.sort { position: absolute; left: 123px; top: 0; }
table { width: 100%; border-collapse: separate; border-spacing: 0; table-layout: fixed; }
.c-date, .c-type { width: 120px; }
.c-size { width: 76px; }
th { height: 26px; padding: 0 0 0 6px; border-right: 1px solid #e5e5e5; font-weight: 400; text-align: left; color: #4c607a; }
th:first-child { padding-left: 3px; }
th:last-child { position: relative; border-right: 0; }
th:last-child::after { content: ""; position: absolute; top: 0; right: -4px; width: 1px; height: 26px; background: #e5e5e5; }
thead::after { content: ""; display: block; height: 5px; }
td { height: 21px; line-height: 21px; padding: 0 0 0 6px; white-space: nowrap; color: #6d6d6d; }
td:first-child { padding-left: 4px; color: #111; }
td:last-child { text-align: right; padding-right: 4px; }
td .i16 { display: inline-block; vertical-align: -4px; margin-right: 4px; }
.hover td { background: #e5f3ff; }
.status { display: flex; align-items: center; height: 24px; padding: 0 5px 0 14px; color: #33475f; }
.status span { flex: 1; }
.view { width: 22px; height: 22px; }
.view.on { background: #cbe8f6; border: 1px solid #26a0da; }

/* taskbar */
.taskbar { display: flex; height: 40px; background: linear-gradient(90deg, #00171f, #000c1c); }
.taskbar > button { width: 49px; }
.taskbar .start { width: 48px; }
.tasksearch { width: 288px; display: flex; align-items: center; gap: 10px; background: #f2f2f2; border: 1px solid #ccc; padding-left: 11px; font-size: 14px; overflow: hidden; }
.tasksearch input::placeholder { color: #333; opacity: 1; }
.taskbar .run { box-shadow: inset 0 -3px #76b9ed; width: 40px; margin: 0 5px 0 6px; }
.taskbar .run.active { width: 48px; margin: 0; background: #35484f; }
.tray { margin-left: auto; display: flex; align-items: center; gap: 9px; color: #fff; padding-right: 4px; }
.clock { width: 60px; margin: 0 -4px 0 -4px; display: flex; flex-direction: column; align-items: center; font-size: 11px; line-height: 18px; white-space: nowrap; }
.note { margin-left: 6px; margin-right: 10px; }
.tray::after { content: ""; width: 1px; height: 40px; background: #46515c; }
```
